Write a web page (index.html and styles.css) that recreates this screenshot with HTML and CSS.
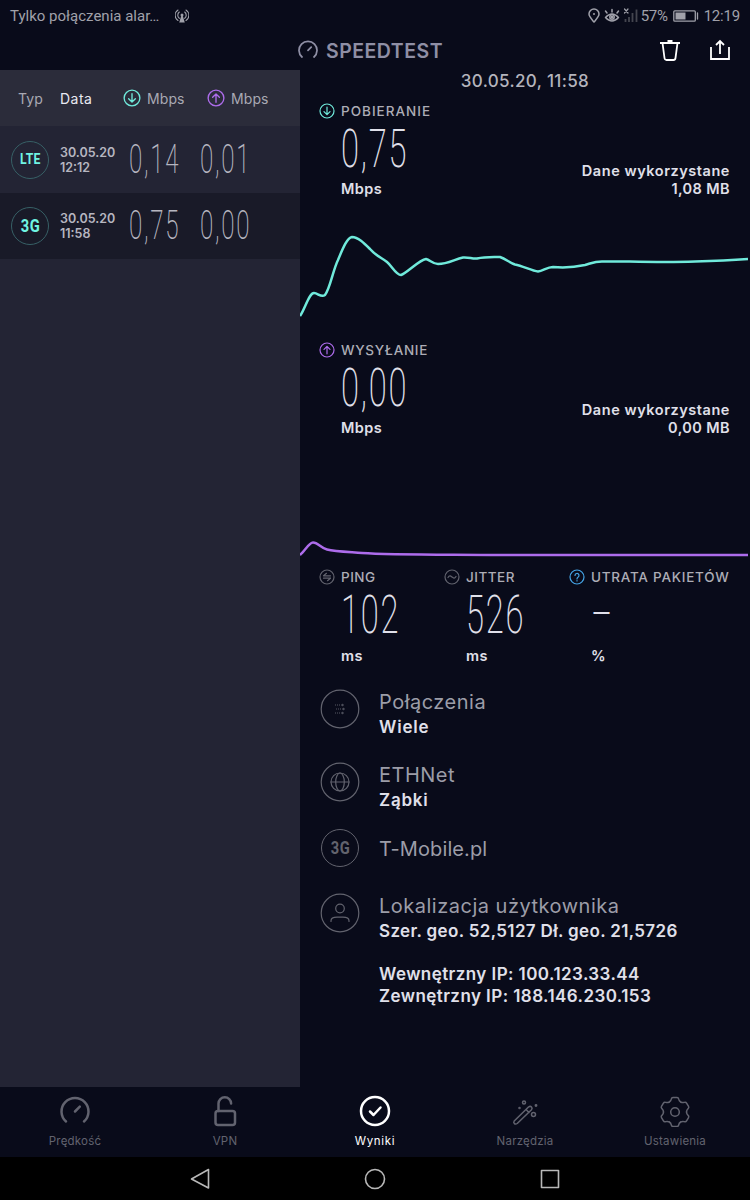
FILE: index.html
```html
<!DOCTYPE html>
<html lang="pl">
<head>
<meta charset="utf-8">
<title>Speedtest</title>
<link rel="stylesheet" href="styles.css">
</head>
<body>
<svg class="defs" width="0" height="0">
  <symbol id="down" viewBox="0 0 16 16"><circle cx="8" cy="8" r="7"/><path d="M8 4.2v7.3M5 8.6l3 3 3-3"/></symbol>
  <symbol id="up" viewBox="0 0 16 16"><circle cx="8" cy="8" r="7"/><path d="M8 11.8V4.5M5 7.4l3-3 3 3"/></symbol>
  <symbol id="gauge" viewBox="0 0 30 30"><path d="M6 25.5a13.5 13.5 0 1 1 18 0M15 15.5l4.8-4.8"/></symbol>
</svg>
<div class="screen">
  <div class="status">
    <span class="carrier">Tylko połączenia alar…</span>
    <svg class="cast" width="14" height="16" viewBox="0 0 14 16"><circle class="solid" cx="7" cy="7" r="1.500"/><path d="M4.300 10.300a4 4 0 0 1 0-6.300M9.700 10.300a4 4 0 0 0 0-6.300M3 12.500a6.200 6.200 0 0 1 0-10.500M11 12.500a6.200 6.200 0 0 0 0-10.500"/><path class="solid" d="M6.200 8h1.600l2 6.500h-5.600z"/></svg>
    <svg class="st-icons" width="52" height="16" viewBox="0 0 52 16">
      <path d="M6 14C3 10.5 1 8.500 1 6a5 5 0 0 1 10 0c0 2.500-2 4.500-5 8z"/><circle class="solid" cx="6" cy="6" r="1"/>
      <path d="M17.500 9.500q6.500-7 13 0q-6.500 7-13 0M19 5l-1.500-2M24 4V1.500M29 5l1.500-2"/><circle cx="24" cy="9" r="2.200"/><circle class="solid" cx="24" cy="9" r="1.500"/>
      <path class="x" d="M36.500 1l3.500 4M40 1l-3.500 4"/>
      <path class="bars" d="M37.500 11v3M41 9v5M44.500 5v9M48.500 1.500v12.500"/>
    </svg>
    <span class="pct">57%</span>
    <svg class="batt" width="26" height="12" viewBox="0 0 26 12"><rect x=".8" y=".8" width="21.500" height="10.400" rx="1"/><path class="solid" d="M2.500 2.500h10v7h-10z"/><path d="M24.500 3v6"/></svg>
    <span class="clock">12:19</span>
  </div>
  <header class="top">
    <svg class="logo" width="20" height="20"><use href="#gauge"/></svg>
    <h1>SPEEDTEST</h1>
    <svg class="trash" width="20" height="21" viewBox="0 0 20 21"><path d="M0 3h20M7.500 1h5M2.500 3l2 15q.3 2 2 2h7q1.700 0 2-2l2-15"/></svg>
    <svg class="share" width="20" height="22" viewBox="0 0 20 22"><path d="M1 8v12h18V8M10 15V2M6 6l4-4 4 4"/></svg>
  </header>
  <main class="main">
    <section class="list">
      <div class="thead">
        <span class="typ">Typ</span><span class="data">Data</span>
        <svg class="ic teal" width="18" height="18"><use href="#down"/></svg><span class="unit-h">Mbps</span>
        <svg class="ic purple second" width="18" height="18"><use href="#up"/></svg><span class="unit-h">Mbps</span>
      </div>
      <div class="row">
        <span class="badge lte"><span>LTE</span></span>
        <span class="when">30.05.20<br><span class="time">12:12</span></span>
        <span class="num"><b>0,14</b></span><span class="num"><b>0,01</b></span>
      </div>
      <div class="row active">
        <span class="badge g3"><span>3G</span></span>
        <span class="when">30.05.20<br><span class="time">11:58</span></span>
        <span class="num"><b>0,75</b></span><span class="num"><b>0,00</b></span>
      </div>
    </section>
    <section class="detail">
      <h2>30.05.20, 11:58</h2>
      <div class="measure">
        <div class="label"><svg class="ic teal" width="16" height="16"><use href="#down"/></svg><span class="pob">POBIERANIE</span></div>
        <div class="big"><b>0,75</b></div>
        <div class="foot"><span class="mb">Mbps</span><span class="used"><span class="dw">Dane wykorzystane</span><br>1,08 MB</span></div>
      </div>
      <svg class="chart" width="450" height="143" viewBox="300 198 450 143">
        <path class="line-down" d="M300 316C305 309 309 293 314 293C318 293 321 298 325 295C330 289 333 270 338 260C343 248 347 238 352 237C358 237 364 243 370 249C376 256 382 258 387 262C392 266 396 275 401 275C407 273 419 260 426 259C430 260 433 264 438 264C448 264 455 259 463 257.500C469 257 472 259 477 258.500C485 256.500 492 257 500 257C506 259 510 263 515 264.500C523 266 532 271 538 271.500C543 271 547 267 553 267C564 268 576 267 585 265C592 263 595 261.500 602 261.500H625C650 262 670 262.500 695 261.500Q725 260.500 748 259"/>
      </svg>
      <div class="measure">
        <div class="label"><svg class="ic purple" width="16" height="16"><use href="#up"/></svg><span class="wys">WYSYŁANIE</span></div>
        <div class="big"><b>0,00</b></div>
        <div class="foot"><span class="mb">Mbps</span><span class="used"><span class="dw">Dane wykorzystane</span><br>0,00 MB</span></div>
      </div>
      <svg class="chart" width="450" height="130" viewBox="300 437 450 130">
        <path class="line-up" d="M300 555C305 551 309 542.500 313 542.500C318 542.500 321 548 327 549.500C335 551.500 350 552 362 553C390 555 440 554.500 500 555H748"/>
      </svg>
      <div class="trio">
        <div class="stat">
          <div class="label"><svg class="ic dim" width="16" height="16" viewBox="0 0 16 16"><circle cx="8" cy="8" r="7"/><path d="M4.500 6.800h7M4.500 6.800l3-2.500M11.500 9.200h-7M11.500 9.200l-3 2.500"/></svg><span class="ping">PING</span></div>
          <div class="big"><b>102</b></div><div class="su">ms</div>
        </div>
        <div class="stat">
          <div class="label"><svg class="ic dim" width="16" height="16" viewBox="0 0 16 16"><circle cx="8" cy="8" r="7"/><path d="M4 8.500c1.500-2.500 2.700-1.500 4-.5s2.500 2 4-.5"/></svg><span class="jit">JITTER</span></div>
          <div class="big"><b>526</b></div><div class="su">ms</div>
        </div>
        <div class="stat">
          <div class="label"><svg class="ic blue" width="16" height="16" viewBox="0 0 16 16"><circle cx="8" cy="8" r="7"/><path d="M6 6.500a2 2 0 1 1 3 1.700q-1 .6-1 1.800M8 11.500v.5"/></svg><span class="utr">UTRATA PAKIETÓW</span></div>
          <div class="big dash"><b>–</b></div><div class="su">%</div>
        </div>
      </div>
      <div class="info i1">
        <svg class="ring" width="40" height="40" viewBox="0 0 40 40"><circle cx="20" cy="20" r="18.800"/><g class="dots"><path d="M15 16h8M16 20h8M15 24h8"/><path class="heads" d="M22 15l1.500 1-1.500 1M23 19l1.500 1-1.500 1M22 23l1.500 1-1.500 1"/></g></svg>
        <div><p class="t pol">Połączenia</p><p class="s wie">Wiele</p></div>
      </div>
      <div class="info i2">
        <svg class="ring" width="40" height="40" viewBox="0 0 40 40"><circle cx="20" cy="20" r="18.800"/><circle cx="20" cy="20" r="9"/><ellipse cx="20" cy="20" rx="4.300" ry="9"/><path d="M11 20h18"/></svg>
        <div><p class="t eth">ETHNet</p><p class="s zab">Ząbki</p></div>
      </div>
      <div class="info i3">
        <span class="ring-text"><span>3G</span></span>
        <div><p class="t tmo">T-Mobile.pl</p></div>
      </div>
      <div class="info i4">
        <svg class="ring" width="40" height="40" viewBox="0 0 40 40"><circle cx="20" cy="20" r="18.800"/><circle cx="20" cy="15.500" r="4.300"/><path d="M11 28.500v-.8q0-3.500 6-3.500h6q6 0 6 3.500v.8"/></svg>
        <div><p class="t lok">Lokalizacja użytkownika</p><p class="s szer">Szer. geo. 52,5127 Dł. geo. 21,5726</p>
        <p class="s ip wew">Wewnętrzny IP: 100.123.33.44</p><p class="s zew">Zewnętrzny IP: 188.146.230.153</p></div>
      </div>
    </section>
  </main>
  <nav class="tabs">
    <div class="tab"><svg width="32" height="32" viewBox="-1 -1 32 32"><use href="#gauge" width="30" height="30"/></svg><span>Prędkość</span></div>
    <div class="tab"><svg width="32" height="32" viewBox="0 0 32 32"><rect x="6.500" y="16" width="19.500" height="14" rx="2.500"/><path d="M9.500 16V8.500a6.300 6.300 0 0 1 12.600 0"/></svg><span>VPN</span></div>
    <div class="tab on"><svg width="32" height="32" viewBox="0 0 32 32"><circle cx="16" cy="16" r="14"/><path d="M11 16.500l3.500 3.500 7-7.500"/></svg><span>Wyniki</span></div>
    <div class="tab thin"><svg width="32" height="32" viewBox="0 0 32 32"><path d="M5.200 26L19.500 12q1.800-1.300 3 0t0 2.800L8.200 28.500q-1.800 1.200-2.900 0t-.1-2.500M17 14.500l3 3"/><circle cx="15" cy="7.500" r="1.500"/><circle cx="24.500" cy="19.500" r="2"/><circle cx="27" cy="10.500" r=".7"/><circle cx="10.500" cy="13" r=".5"/></svg><span>Narzędzia</span></div>
    <div class="tab thin"><svg width="32" height="32" viewBox="-16 -17 32 32"><path id="tooth" d="M-5.700-10C-4.500-10.700-4-11.500-3.700-12.800Q-3.400-14.500-2-14.500H2Q3.400-14.500 3.700-12.800C4-11.500 4.500-10.700 5.700-10"/><use href="#tooth" transform="rotate(60)"/><use href="#tooth" transform="rotate(120)"/><use href="#tooth" transform="rotate(180)"/><use href="#tooth" transform="rotate(240)"/><use href="#tooth" transform="rotate(300)"/><circle r="4.300"/></svg><span>Ustawienia</span></div>
  </nav>
  <div class="system">
    <svg width="22" height="22" viewBox="0 0 22 22"><path d="M19.500 1.500v18.500L2.500 11z"/></svg>
    <svg width="22" height="22" viewBox="0 0 22 22"><circle cx="11" cy="11" r="9.500"/></svg>
    <svg width="22" height="22" viewBox="0 0 22 22"><rect x="2.500" y="2.500" width="17" height="17"/></svg>
  </div>
</div>
</body>
</html>
```
FILE: styles.css
```css
* { box-sizing: border-box; margin: 0; padding: 0; }
body { background: #090b1a; font-family: Inter, "Noto Sans", sans-serif; color: #e0e0ea; }
svg { fill: none; stroke: currentColor; stroke-linecap: round; stroke-linejoin: round; flex: none; display: block; }
.defs { position: absolute; }
.solid { fill: currentColor; stroke: none; }
.screen { width: 750px; height: 1200px; display: flex; flex-direction: column; overflow: hidden; }

.status { height: 30px; display: flex; align-items: center; padding: 1px 10px 0; color: #a0a1aa; font-family: Roboto, sans-serif; white-space: nowrap; }
.carrier { width: 165px; font-size: 15px; }
.cast { stroke-width: 1.100; }
.st-icons { margin-left: auto; stroke-width: 1.500; }
.st-icons .x { stroke-width: 1.200; }
.st-icons .bars { stroke: #44454f; stroke-width: 1.800; stroke-linecap: butt; }
.pct { margin-left: 1px; font-size: 15px; letter-spacing: -.3px; }
.batt { margin: 0 5px; stroke-width: 1.300; }
.clock { font-size: 15px; letter-spacing: -.2px; }

.top { height: 40px; display: flex; align-items: center; padding: 0 20px 0 298px; color: #8f8fa5; }
.logo { stroke-width: 2.600; }
.top h1 { font-size: 19.500px; line-height: 24px; font-weight: 600; margin: 1px auto 0 8px; letter-spacing: .5px; }
.trash, .share { color: #fff; stroke-width: 1.800; stroke-linecap: butt; stroke-linejoin: miter; }
.share { margin-left: 30px; }

.main { height: 1017px; display: flex; }
.list { width: 300px; background: #232434; }
.thead { height: 56px; background: #2b2c3a; display: flex; align-items: center; padding-left: 18px; font-size: 14px; color: #a9a9b3; letter-spacing: .1px; }
.typ { width: 42px; }
.data { width: 63px; color: #e9e9f1; letter-spacing: .5px; }
.teal { color: #70eadb; }
.purple { color: #ad6ceb; }
.dim { color: #62636e; }
.blue { color: #45a5e7; }
.ic { stroke-width: 1.200; }
.unit-h { margin-left: 6px; width: 39px; }
.second { margin-left: 21px; }
.row { height: 67px; display: flex; align-items: center; padding-left: 11px; color: #b6b6c0; }
.row.active { height: 66px; background: #191a28; }
.badge { width: 38px; height: 38px; border: 1px solid #376066; border-radius: 50%; color: #70f4e3; font-family: Roboto, sans-serif; font-weight: 700; display: flex; align-items: center; justify-content: center; }
.badge span, .ring-text span { transform: scaleX(.84); letter-spacing: .5px; }
.lte { font-size: 14.500px; }
.g3 { font-size: 17.500px; }
.when { margin-left: 11px; width: 69px; font-size: 12.500px; font-weight: 600; line-height: 15px; }
.num { width: 71px; height: 48px; line-height: 48px; margin-top: -2px; }
.num b, .big b { display: inline-block; font-family: Roboto, sans-serif; font-weight: 200; transform-origin: 0 50%; transform: scaleX(.59); white-space: nowrap; }
.num b { font-size: 41px; letter-spacing: 2.800px; }

.detail { width: 450px; }
.detail h2 { text-align: center; font-size: 17px; font-weight: 500; line-height: 22px; height: 32px; color: #b4b4bd; letter-spacing: .35px; }
.measure { height: 96px; padding-left: 19px; }
.label { display: flex; align-items: center; height: 18px; gap: 6px; font-size: 13.500px; font-weight: 500; color: #adadb6; white-space: nowrap; }
.pob { letter-spacing: 1px; }
.wys { letter-spacing: .7px; }
.ping, .jit { letter-spacing: .5px; }
.utr { letter-spacing: .75px; }
.big { height: 56px; line-height: 56px; padding-left: 22px; }
.big b { font-size: 54.500px; letter-spacing: 3px; transform: scaleX(.6); }
.foot { display: flex; justify-content: space-between; align-items: flex-end; height: 22px; padding: 0 20px 0 22px; font-size: 14.500px; line-height: 18px; font-weight: 600; }
.used { text-align: right; letter-spacing: .4px; }
.mb, .su { letter-spacing: .4px; }
.dw { letter-spacing: .55px; }
.chart { stroke-width: 2.500; stroke-linecap: butt; }
.line-down { stroke: #70eadb; }
.line-up { stroke: #ad6ceb; }
.trio { height: 122px; display: grid; grid-template-columns: 125px 125px 1fr; padding: 1px 0 0 19px; }
.trio .big { height: 59px; }
.su { padding-left: 22px; font-size: 14.500px; font-weight: 600; line-height: 22px; }
.info { display: flex; gap: 19px; padding-left: 20px; }
.info div { margin-top: 1px; }
.ring { color: #62636e; stroke-width: 1.200; }
.dots { stroke-width: .9; stroke-dasharray: 1 1; stroke-linecap: butt; }
.heads { stroke-dasharray: none; }
.t { font-size: 20px; line-height: 25px; color: #9c9da8; white-space: nowrap; letter-spacing: .5px; }
.tmo { letter-spacing: .1px; }
.s { font-size: 17px; line-height: 25px; font-weight: 600; white-space: nowrap; letter-spacing: .4px; }
.wie, .zab { letter-spacing: .8px; }
.szer { letter-spacing: .35px; }
.i1 { height: 73px; }
.i2 { height: 66px; }
.i3 { height: 65px; }
.ring-text { width: 38px; height: 38px; margin: 1px; border: 1.200px solid #62636e; border-radius: 50%; display: flex; align-items: center; justify-content: center; color: #62636e; font: 700 17.500px Roboto, sans-serif; }
.i3 .t { line-height: 40px; }
.ip { margin-top: 20px; }
.wew, .zew { line-height: 21.500px; letter-spacing: .43px; }

.tabs { height: 70px; display: grid; grid-template-columns: repeat(5, 150px); color: #62636f; }
.tab { display: flex; flex-direction: column; align-items: center; padding-top: 8px; font-size: 11.500px; }
.tab svg { stroke-width: 2.500; }
.tab.thin svg { stroke-width: 1.500; }
.tab span { margin-top: 7px; line-height: 15px; letter-spacing: .2px; }
.tab.on { color: #fff; }
.tab.on span { letter-spacing: .7px; }
.system { height: 43px; background: #000; display: flex; justify-content: center; gap: 153px; padding-top: 11px; color: #b8b8b8; stroke-width: 1.600; }
```
